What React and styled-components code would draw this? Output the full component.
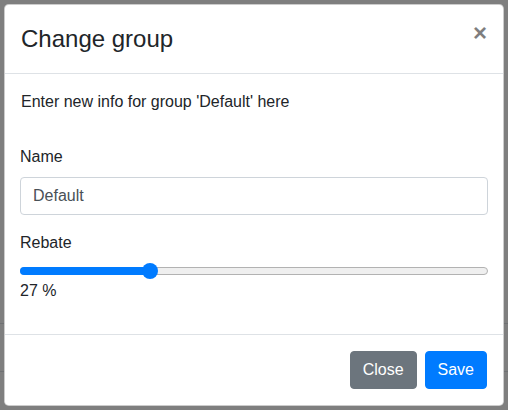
import React from 'react';
import styled, { createGlobalStyle } from 'styled-components';

const GlobalStyle = createGlobalStyle`
  html, body {
    margin: 0;
    padding: 0;
    background: #fff;
  }
  body {
    font-family: "Liberation Sans", Arial, sans-serif;
    color: #212529;
    font-size: 16px;
    line-height: 1.5;
  }
  * {
    box-sizing: border-box;
  }
`;

const Page = styled.div`
  position: relative;
  width: 508px;
  height: 410px;
  overflow: hidden;
`;

const Behind = styled.div`
  padding-top: 323px;
`;

const BehindRow = styled.div`
  height: 48px;
  border-top: 1px solid #dee2e6;
`;

const Backdrop = styled.div`
  position: absolute;
  inset: 0;
  background: rgba(0, 0, 0, 0.5);
`;

const Dialog = styled.div`
  position: absolute;
  top: 4px;
  left: 4px;
  width: 500px;
  background: #fff;
  border: 1px solid rgba(0, 0, 0, 0.2);
  border-radius: 0.3rem;
  display: flex;
  flex-direction: column;
`;

const Header = styled.div`
  display: flex;
  align-items: flex-start;
  justify-content: space-between;
  padding: 1rem;
  border-bottom: 1px solid #dee2e6;
`;

const Title = styled.h4`
  margin: 0;
  font-size: 1.5rem;
  font-weight: 500;
  line-height: 1.5;
`;

const CloseX = styled.button`
  padding: 1rem;
  margin: -1rem -1rem -1rem auto;
  background: transparent;
  border: 0;
  font-family: inherit;
  font-size: 1.5rem;
  font-weight: 700;
  line-height: 1;
  color: #000;
  opacity: 0.5;
  text-shadow: 0 1px 0 #fff;
  cursor: pointer;
`;

const Body = styled.div`
  padding: 1rem 15px 15px;
`;

const Intro = styled.p`
  margin: 0 0 31px 1px;
`;

const Group = styled.div`
  margin-bottom: 1rem;
`;

const Label = styled.label`
  display: inline-block;
  margin-bottom: 0.5rem;
`;

const Input = styled.input`
  display: block;
  width: 100%;
  height: 38px;
  padding: 0.375rem 0.75rem;
  font-family: inherit;
  font-size: 1rem;
  line-height: 1.5;
  color: #495057;
  background: #fff;
  border: 1px solid #ced4da;
  border-radius: 0.25rem;
`;

const Slider = styled.div`
  position: relative;
  height: 16px;
  display: flex;
  align-items: center;
`;

const Track = styled.div`
  position: relative;
  width: 100%;
  height: 8px;
  background: #efefef;
  border: 1px solid #b2b2b2;
  border-radius: 4px;
`;

const Fill = styled.div`
  position: absolute;
  left: -1px;
  top: -1px;
  bottom: -1px;
  background: #007bff;
  border-radius: 4px 0 0 4px;
`;

const Thumb = styled.div`
  position: absolute;
  top: 0;
  width: 16px;
  height: 16px;
  border-radius: 50%;
  background: #007bff;
`;

const Footer = styled.div`
  display: flex;
  align-items: center;
  justify-content: flex-end;
  padding: 0.75rem;
  border-top: 1px solid #dee2e6;
`;

const Button = styled.button`
  margin: 0.25rem;
  padding: 0.375rem 0.75rem;
  font-family: inherit;
  font-size: 1rem;
  line-height: 1.5;
  color: #fff;
  background: ${(p) => (p.$variant === 'primary' ? '#007bff' : '#6c757d')};
  border: 1px solid ${(p) => (p.$variant === 'primary' ? '#007bff' : '#6c757d')};
  border-radius: 0.25rem;
  cursor: pointer;
`;

export default function App() {
  const rebate = 27;
  const width = 468;
  const thumbLeft = (rebate / 100) * (width - 16);

  return (
    <Page>
      <GlobalStyle />
      <Behind>
        <BehindRow />
        <BehindRow />
      </Behind>
      <Backdrop />
      <Dialog>
        <Header>
          <Title>Change group</Title>
          <CloseX aria-label="Close">×</CloseX>
        </Header>
        <Body>
          <Intro>Enter new info for group 'Default' here</Intro>
          <Group>
            <Label>Name</Label>
            <Input defaultValue="Default" />
          </Group>
          <Group>
            <Label>Rebate</Label>
            <Slider>
              <Track>
                <Fill style={{ width: thumbLeft + 8 }} />
              </Track>
              <Thumb style={{ left: thumbLeft }} />
            </Slider>
            <div>{rebate} %</div>
          </Group>
        </Body>
        <Footer>
          <Button>Close</Button>
          <Button $variant="primary">Save</Button>
        </Footer>
      </Dialog>
    </Page>
  );
}
